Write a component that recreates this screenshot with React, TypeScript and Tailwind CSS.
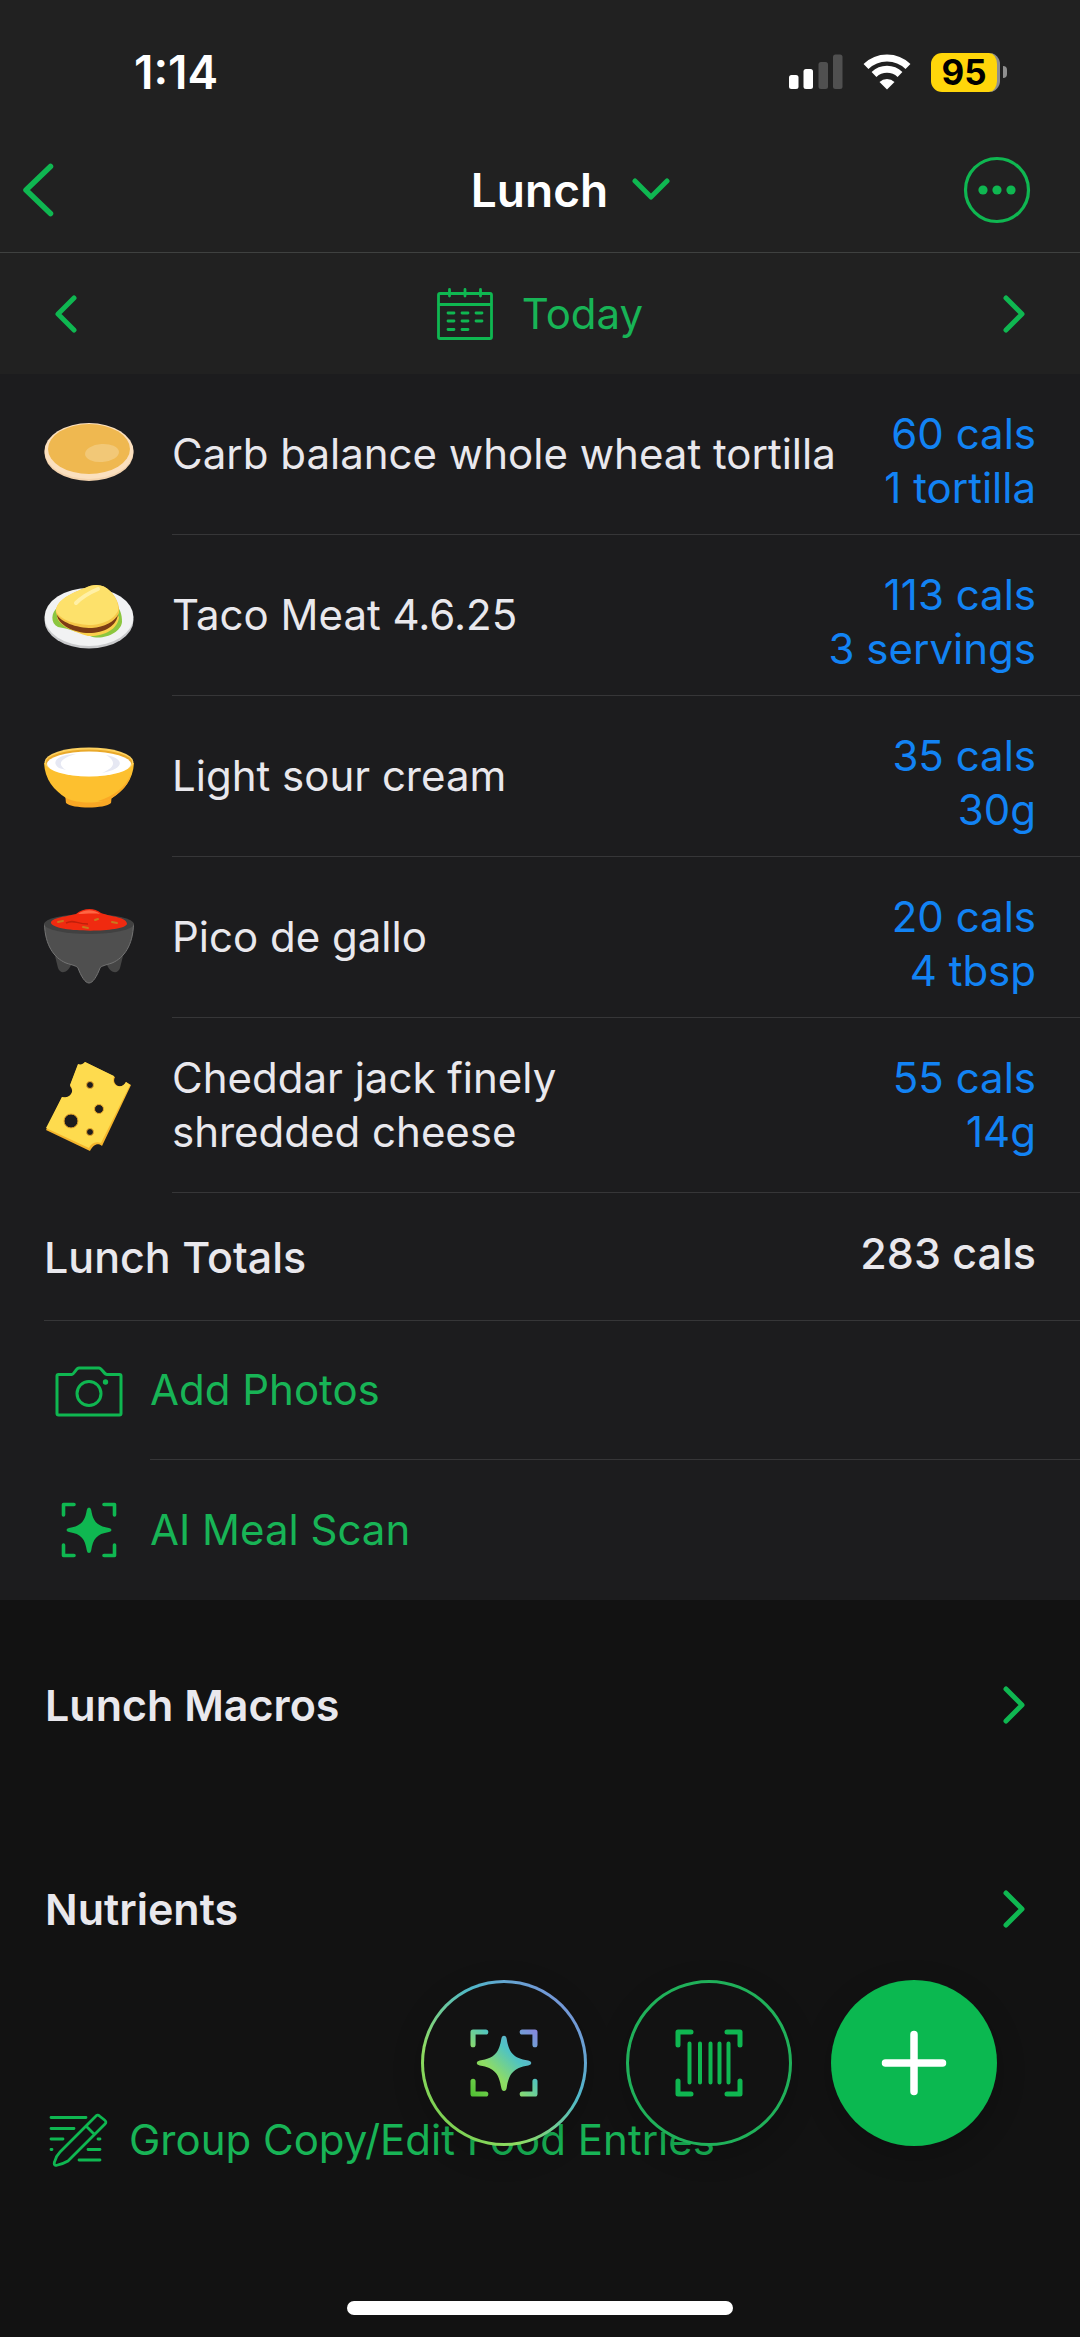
import React from 'react';

const GREEN = '#0fb751';

const foods = [
  { name: 'Carb balance whole wheat tortilla', calories: '60 cals', amount: '1 tortilla', icon: TortillaIcon },
  { name: 'Taco Meat 4.6.25', calories: '113 cals', amount: '3 servings', icon: SandwichIcon },
  { name: 'Light sour cream', calories: '35 cals', amount: '30g', icon: CreamIcon },
  { name: 'Pico de gallo', calories: '20 cals', amount: '4 tbsp', icon: SalsaIcon },
  { name: 'Cheddar jack finely shredded cheese', calories: '55 cals', amount: '14g', icon: CheeseIcon },
];

function TortillaIcon() {
  return (
    <svg viewBox="0 0 90 90" className="size-[90px]" aria-hidden="true">
      <ellipse cx="45" cy="43" rx="44.5" ry="28" fill="#f3d3ae" />
      <ellipse cx="45" cy="41" rx="44.5" ry="28" fill="#fbe0bf" />
      <ellipse cx="45" cy="39" rx="41" ry="25" fill="#efb850" />
      <ellipse cx="58" cy="43" rx="17" ry="9" fill="#f2c877" transform="rotate(-4 58 43)" />
    </svg>
  );
}

function SandwichIcon() {
  return (
    <svg viewBox="0 0 90 90" className="size-[90px]" aria-hidden="true">
      <ellipse cx="45" cy="49" rx="44.5" ry="28.5" fill="#c9cacc" />
      <ellipse cx="45" cy="46" rx="44.5" ry="29" fill="#f1f2f3" />
      <path d="M14 36C7 41 6 52 14 56C26 58 36 62 46 65C58 70 77 62 78 51C78 43 76 38 72 34Z" fill="#8cc63f" />
      <path d="M13 46C15 55 30 61 44 65C58 66 74 59 75 46L70 40L18 40Z" fill="#fbd04a" />
      <path d="M13 44C14 54 30 62 45 62C60 62 73 55 74 43L70 38L20 38Z" fill="#7d3c14" />
      <path d="M12 42C11 32 22 24 41 17C50 12 60 13 66 20C72 26 76 34 75 42C71 51 60 56 48 57C32 57 16 51 12 42Z" fill="#f6c648" />
      <path d="M12 40C12 31 22 24 41 17C50 12 60 13 66 20C72 26 75 33 74 40C70 48 60 53 48 54C32 54 16 49 12 40Z" fill="#fde16b" />
      <path d="M32 32C38 26 47 21 54 18" stroke="#fff0a6" strokeWidth="4" strokeLinecap="round" fill="none" />
    </svg>
  );
}

function CreamIcon() {
  return (
    <svg viewBox="0 0 90 90" className="size-[90px]" aria-hidden="true">
      <path d="M21 62H68L67 71C61 77 28 77 22 71Z" fill="#f9a825" />
      <path d="M0 31C1 48 10 58 22 66C34 72 56 72 68 66C80 58 89 48 90 31Z" fill="#fdc02f" />
      <path d="M87 42C82 55 70 64 54 69C58 70 64 68 68 66C79 59 85 51 87 42Z" fill="#f9a825" />
      <ellipse cx="45" cy="30" rx="44.5" ry="14.5" fill="#fdd160" />
      <ellipse cx="45" cy="30" rx="43" ry="12.5" fill="#e9a92b" />
      <ellipse cx="45" cy="32" rx="42" ry="12.5" fill="#ffffff" />
      <path d="M15 36C5 29 17 22 32 22C17 26 12 32 22 38ZM62 23C82 27 80 37 58 41C72 35 72 29 62 23Z" fill="#e6e8f3" />
    </svg>
  );
}

function SalsaIcon() {
  return (
    <svg viewBox="0 0 90 90" className="size-[90px] overflow-visible" aria-hidden="true">
      <path d="M9 55L14 75C16 81 23 81 27 72L29 65ZM81 55L76 75C74 81 67 81 63 72L61 65Z" fill="#454545" />
      <path
        d="M0.500 31C1 52 10 65 22 70C28 72 33 73 34 75C37 83 41 90 45 90C49 90 53 83 56 75C57 73 62 72 68 70C80 65 89 52 89.500 31Z"
        fill="#4f4f4f"
        stroke="#747474"
        strokeWidth="1"
      />
      <ellipse cx="45" cy="31" rx="45" ry="10" fill="#414141" />
      <path d="M7 30C7 25 20 24 32 21C39 15 50 14 57 20C68 24 83 24 83 31C80 40 10 40 7 30Z" fill="#f02a10" />
      <path d="M34 21C40 16 50 16 56 21C50 20 40 21 34 21Z" fill="#ff6543" />
      <path d="M22 30C30 26 32 31 44 31" stroke="#c01f0b" strokeWidth="1.500" fill="none" />
      <path d="M14 29l5-1M39 34l5 1M51 27l3-1M68 29l5 1" stroke="#c9781d" strokeWidth="2" strokeLinecap="round" />
    </svg>
  );
}

function CheeseIcon() {
  return (
    <svg viewBox="0 0 90 90" className="size-[90px]" aria-hidden="true">
      <path
        d="M34 4C37 5 39 4 41 1L71 16C67 23 77 30 82 21L87 24L58 85C54 81 49 84 46 90L2 69L18 36C24 39 32 32 26 25Z"
        fill="#f5b52c"
      />
      <path
        d="M34 3C37 4 39 3 41 1L70 15C66 24 77 30 82 21L86 24L57 82C52 80 47 82 45 87L2 67L18 36C25 38 32 31 26 24Z"
        fill="#fedb4e"
      />
      <g fill="#1c1c1e" stroke="#e7a62a" strokeWidth="1">
        <circle cx="46" cy="24" r="3.5" />
        <circle cx="55" cy="48" r="4.5" />
        <circle cx="27" cy="60" r="7" />
        <circle cx="46" cy="71" r="3.5" />
      </g>
    </svg>
  );
}

function Chevron({ path, className }: { path: string; className: string }) {
  return (
    <svg viewBox="0 0 24 38" className={className} fill="none" stroke={GREEN} strokeWidth="5" strokeLinecap="round" strokeLinejoin="round" aria-hidden="true">
      <path d={path} />
    </svg>
  );
}

const LEFT = 'M20 3L4 19L20 35';
const RIGHT = 'M4 3L20 19L4 35';

function CalendarIcon() {
  return (
    <svg viewBox="0 0 56 52" className="h-[52px] w-14" fill="none" stroke={GREEN} strokeWidth="2.8" strokeLinecap="round" aria-hidden="true">
      <rect x="1.500" y="5.500" width="53" height="45" rx="1.500" />
      <path d="M2 16.500H54M12.500 1.500V8M28 1.500V8M43.500 1.500V8" />
      <path d="M11 25H17M25 25H31M39 25H45M11 33H17M25 33H31M39 33H45M11 41.500H17M25 41.500H31" />
    </svg>
  );
}

function CameraIcon() {
  return (
    <svg viewBox="0 0 68 52" className="h-[52px] w-[68px]" fill="none" stroke={GREEN} strokeWidth="3" strokeLinejoin="round" aria-hidden="true">
      <path d="M3.500 9.500H17C19 9.500 21 3 24 3H44C47 3 49 9.500 52 9.500H64.500Q66 9.500 66 11V48.500Q66 50 64.500 50H3.500Q2 50 2 48.500V11Q2 9.500 3.500 9.500Z" />
      <circle cx="34" cy="28.500" r="12" />
      <circle cx="50.500" cy="17" r="2.700" fill={GREEN} stroke="none" />
    </svg>
  );
}

function ScanIcon({ className, color = GREEN, stroke = 3.6 }: { className: string; color?: string; stroke?: number }) {
  return (
    <svg viewBox="0 0 56 56" className={className} fill="none" stroke={color} strokeLinecap="round" strokeLinejoin="round" aria-hidden="true">
      <defs>
        <linearGradient id="scan" gradientUnits="userSpaceOnUse" x1="0" y1="56" x2="56" y2="0">
          <stop offset="0" stopColor="#4cbf30" />
          <stop offset="0.350" stopColor="#8fdc63" />
          <stop offset="0.620" stopColor="#4fc3c3" />
          <stop offset="1" stopColor="#8b83e0" />
        </linearGradient>
      </defs>
      <path strokeWidth={stroke} d="M2.500 13V2.500H13M43 2.500H53.500V13M53.500 43V53.500H43M13 53.500H2.500V43" />
      <path
        fill={color}
        stroke="none"
        d="M28 5.500Q29.800 5.500 30.200 8C32 19 35.500 24 48 26Q50.500 26.500 50.500 28T48 30C35.500 32 32 37 30.200 48.500Q29.800 51 28 51T25.800 48.500C24 37 20.500 32 8 30Q5.500 29.500 5.500 28T8 26C20.500 24 24 19 25.800 8Q26.200 5.500 28 5.500Z"
      />
    </svg>
  );
}

function BarcodeIcon() {
  return (
    <svg viewBox="0 0 68 68" className="size-[68px]" fill="none" stroke={GREEN} strokeWidth="5" strokeLinecap="round" strokeLinejoin="round" aria-hidden="true">
      <path d="M3 16V3H16M52 3H65V16M65 52V65H52M16 65H3V52" />
      <path d="M14.500 14.500V53.500M25 14.500V53.500M35.500 14.500V53.500M44.500 14.500V53.500M53.500 14.500V53.500" strokeWidth="4" />
    </svg>
  );
}

function EditIcon() {
  return (
    <svg viewBox="0 0 60 54" className="h-[54px] w-[60px]" fill="none" stroke={GREEN} strokeWidth="2.800" strokeLinecap="round" strokeLinejoin="round" aria-hidden="true">
      <path d="M3 4.500H38M3 15.500H26M3 26H15M3 36.500H4M50 26H52M40 36.500H52M31 47H52" />
      <path d="M47.500 3.500Q49.500 1 51.500 3L56.500 7Q59 9 57 11L20 48Q15 51 8 52.500Q5.500 52 6.500 49Q8 43 12 39ZM38 13L46 21" />
    </svg>
  );
}

function StatusBar() {
  return (
    <div className="flex h-[127px] items-start justify-between pt-[45px] pl-[134px] pr-[73px]">
      <span className="text-[46px] leading-[54px] font-semibold text-white">1:14</span>
      <div className="flex h-[54px] items-center">
        <svg viewBox="0 0 54 36" className="mr-5 h-9 w-[54px]" fill="#ffffff" aria-label="Signal">
          <rect x="0" y="21" width="9.500" height="14" rx="2.500" />
          <rect x="14.500" y="15" width="9.500" height="20" rx="2.500" />
          <rect x="29.500" y="8" width="9.500" height="27" rx="2.500" fill="#505050" />
          <rect x="44" y="0.500" width="9.500" height="34.500" rx="2.500" fill="#505050" />
        </svg>
        <svg viewBox="0 0 48 36" className="mr-5 h-9 w-12" aria-label="Wi-Fi">
          <g fill="none" stroke="#ffffff" strokeWidth="7">
            <path d="M3 12.500A30 30 0 0 1 45 12.500" />
            <path d="M11 20.500A19 19 0 0 1 37 20.500" />
          </g>
          <path d="M24 35.500L16.500 28A11 11 0 0 1 31.500 28Z" fill="#ffffff" />
        </svg>
        <div className="flex items-center gap-[3px]">
          <div className="flex h-[39px] w-[69px] items-center justify-center rounded-[11px] border-r-3 border-[#8f8f8f] bg-[#ffd60a] text-[35px] leading-[39px] font-bold text-black">
            95
          </div>
          <div className="h-3 w-1 rounded-r-full bg-[#8f8f8f]" />
        </div>
      </div>
    </div>
  );
}

function SectionLink({ title }: { title: string }) {
  return (
    <button type="button" className="flex w-full items-center justify-between pl-[45px] pr-[54px] text-left">
      <span className="text-[43px] leading-[54px] font-semibold">{title}</span>
      <Chevron path={RIGHT} className="h-[38px] w-6" />
    </button>
  );
}

export default function App() {
  return (
    <div className="flex min-h-screen flex-col bg-[#121212] font-['Inter','Liberation_Sans',sans-serif] text-[42px] leading-[54px] text-[#e9e8ed]">
      <header className="bg-[#212121]">
        <StatusBar />
        <div className="grid h-[126px] grid-cols-[1fr_auto_1fr] items-center border-b border-[#3f4140] pl-[22px] pr-[49px]">
          <button type="button" aria-label="Back" className="justify-self-start">
            <svg viewBox="0 0 32 54" className="h-[54px] w-8" fill="none" stroke={GREEN} strokeWidth="5.500" strokeLinecap="round" strokeLinejoin="round">
              <path d="M28.500 3.500L4 27L28.500 50.500" />
            </svg>
          </button>
          <button type="button" className="flex items-center gap-6 pl-[88px] text-white">
            <h1 className="text-[46px] leading-[54px] font-semibold">Lunch</h1>
            <svg viewBox="0 0 38 24" className="h-6 w-[38px]" fill="none" stroke={GREEN} strokeWidth="5" strokeLinecap="round" strokeLinejoin="round" aria-hidden="true">
              <path d="M3 3L19 19L35 3" />
            </svg>
          </button>
          <button type="button" aria-label="More" className="justify-self-end">
            <svg viewBox="0 0 68 68" className="size-[68px]" fill={GREEN}>
              <circle cx="34" cy="34" r="31.500" fill="none" stroke={GREEN} strokeWidth="3.200" />
              <circle cx="20" cy="34" r="4.600" />
              <circle cx="34" cy="34" r="4.600" />
              <circle cx="48" cy="34" r="4.600" />
            </svg>
          </button>
        </div>
        <nav className="flex h-[121px] items-center justify-between px-[54px]">
          <button type="button" aria-label="Previous day">
            <Chevron path={LEFT} className="h-[38px] w-6" />
          </button>
          <button type="button" className="flex items-center gap-[29px] text-[#18b456]">
            <CalendarIcon />
            Today
          </button>
          <button type="button" aria-label="Next day">
            <Chevron path={RIGHT} className="h-[38px] w-6" />
          </button>
        </nav>
      </header>

      <main className="flex flex-col">
        <section className="bg-[#1c1c1e]">
          <ul>
            {foods.map(food => (
              <li key={food.name} className="flex items-center pl-11">
                <food.icon />
                <div className="ml-[38px] flex flex-1 justify-between border-b border-[#363638] pr-11">
                  <span className="max-w-[680px] self-center py-[33px] text-balance">{food.name}</span>
                  <span className="shrink-0 pt-[33px] pb-[19px] text-right text-[#1283f4]">
                    {food.calories}
                    <br />
                    {food.amount}
                  </span>
                </div>
              </li>
            ))}
          </ul>
          <div className="ml-11 flex h-[128px] items-center justify-between border-b border-[#363638] pr-11 text-[43px] font-medium">
            <span>Lunch Totals</span>
            <span className="pb-2">283 cals</span>
          </div>
          <button type="button" className="flex w-full items-center pl-[55px] text-left text-[#18b456]">
            <CameraIcon />
            <span className="ml-[27px] flex-1 border-b border-[#363638] py-[42px]">Add Photos</span>
          </button>
          <button type="button" className="flex w-full items-center pl-[61px] text-left text-[#18b456]">
            <ScanIcon className="size-14" />
            <span className="ml-[33px] py-[43px]">AI Meal Scan</span>
          </button>
        </section>

        <section className="flex flex-col gap-[150px] pt-[78px]">
          <SectionLink title="Lunch Macros" />
          <SectionLink title="Nutrients" />
        </section>

        <button type="button" className="mt-[177px] flex items-center gap-[21px] pl-12 text-left text-[#18b456]">
          <EditIcon />
          Group Copy/Edit Food Entries
        </button>
      </main>

      <div className="fixed right-[83px] bottom-[191px] flex gap-[39px]">
        <button type="button" aria-label="AI Meal Scan" className="flex size-[166px] items-center justify-center rounded-full bg-[linear-gradient(45deg,#6cc644,#8fdc63_30%,#4fb8c9_62%,#8b83e0)] p-[3px] shadow-[0_8px_30px_rgba(0,0,0,0.2)]">
          <span className="flex size-full items-center justify-center rounded-full bg-[#121212]">
            <ScanIcon className="size-[68px]" color="url(#scan)" stroke={4.2} />
          </span>
        </button>
        <button type="button" aria-label="Scan barcode" className="flex size-[166px] items-center justify-center rounded-full border-3 border-[#20b15a] bg-[#121212] shadow-[0_8px_30px_rgba(0,0,0,0.2)]">
          <BarcodeIcon />
        </button>
        <button type="button" aria-label="Add food" className="flex size-[166px] items-center justify-center rounded-full bg-[#0bb850] shadow-[0_8px_30px_rgba(0,0,0,0.2)]">
          <svg viewBox="0 0 66 66" className="size-[66px]" stroke="#ffffff" strokeWidth="7.500" strokeLinecap="round">
            <path d="M33 4.500V61.500M4.500 33H61.500" />
          </svg>
        </button>
      </div>
      <div className="fixed bottom-[22px] left-1/2 h-[14px] w-[386px] -translate-x-1/2 rounded-full bg-white" />
    </div>
  );
}
